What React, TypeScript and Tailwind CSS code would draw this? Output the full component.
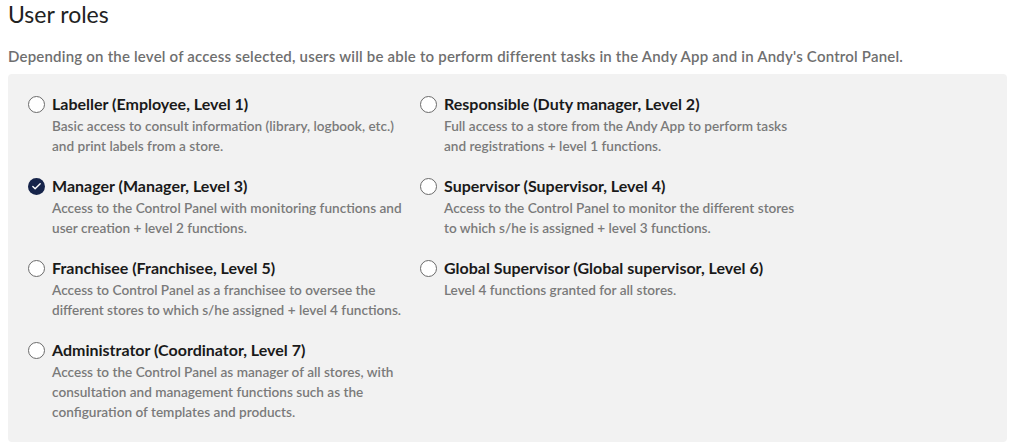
import { Check } from 'lucide-react'

interface Role {
  title: string
  description: string
  checked?: boolean
}

const roles: Role[] = [
  {
    title: 'Labeller (Employee, Level 1)',
    description: 'Basic access to consult information (library, logbook, etc.) and print labels from a store.',
  },
  {
    title: 'Responsible (Duty manager, Level 2)',
    description: 'Full access to a store from the Andy App to perform tasks and registrations + level 1 functions.',
  },
  {
    title: 'Manager (Manager, Level 3)',
    description: 'Access to the Control Panel with monitoring functions and user creation + level 2 functions.',
    checked: true,
  },
  {
    title: 'Supervisor (Supervisor, Level 4)',
    description: 'Access to the Control Panel to monitor the different stores to which s/he is assigned + level 3 functions.',
  },
  {
    title: 'Franchisee (Franchisee, Level 5)',
    description: 'Access to Control Panel as a franchisee to oversee the different stores to which s/he assigned + level 4 functions.',
  },
  {
    title: 'Global Supervisor (Global supervisor, Level 6)',
    description: 'Level 4 functions granted for all stores.',
  },
  {
    title: 'Administrator (Coordinator, Level 7)',
    description: 'Access to the Control Panel as manager of all stores, with consultation and management functions such as the configuration of templates and products.',
  },
]

function Radio({ checked }: { checked?: boolean }) {
  if (checked) {
    return (
      <span className="mt-[2px] flex h-[17px] w-[17px] shrink-0 items-center justify-center rounded-full bg-[#16244a]">
        <Check className="h-[11px] w-[11px] text-white" strokeWidth={3} />
      </span>
    )
  }
  return <span className="mt-[2px] h-[17px] w-[17px] shrink-0 rounded-full border-[1.5px] border-[#6b6b6b] bg-white" />
}

export default function App() {
  return (
    <div className="h-[447px] w-[1017px] bg-white px-2 font-['Lato',sans-serif]">
      <h1 className="pt-[1px] text-[23px] leading-[26px] text-[#222]">User roles</h1>
      <p className="mt-[19px] text-[15px] font-semibold leading-[20px] tracking-[0.2px] text-[#6f6f6f]">
        Depending on the level of access selected, users will be able to perform different tasks in the Andy App and in Andy's Control Panel.
      </p>
      <div className="mt-[8px] w-[999px] rounded bg-[#f2f2f2] px-5 py-5">
        <div className="grid grid-cols-[392px_392px] gap-y-5">
          {roles.map((role) => (
            <div key={role.title} className="flex gap-[7px]">
              <Radio checked={role.checked} />
              <div className="w-[360px]">
                <div className="text-[16px] font-bold leading-[20px] text-[#1a1a1a]">{role.title}</div>
                <div className="mt-[2px] text-[13.6px] font-semibold leading-[20px] text-[#7a7a7a]">{role.description}</div>
              </div>
            </div>
          ))}
        </div>
      </div>
    </div>
  )
}
